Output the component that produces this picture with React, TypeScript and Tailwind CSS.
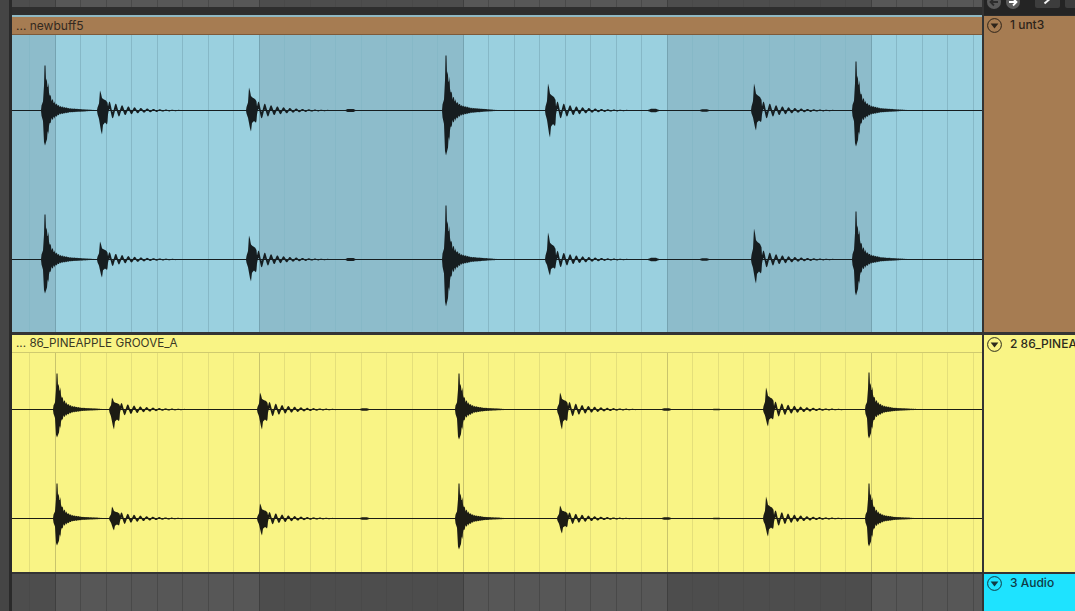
type Hit = { x: number; up: number; down: number; kind: "kick" | "ring" | "blob" };

const hit = (x: number, up: number, down: number, kind: Hit["kind"]): Hit => ({ x, up, down, kind });

const BLUE_TOP = [
  hit(44, 45, 35, "kick"), hit(100, 20, 24, "ring"), hit(249, 23, 21, "ring"), hit(348, 1.6, 1.6, "blob"),
  hit(445, 55, 45, "kick"), hit(548, 27, 27, "ring"), hit(651, 1.8, 1.8, "blob"), hit(702, 1.2, 1.2, "blob"),
  hit(754, 27, 20, "ring"), hit(855, 49, 36, "kick"),
];
const BLUE_BOTTOM = [
  hit(44, 45, 34, "kick"), hit(100, 18, 18, "ring"), hit(249, 24, 22, "ring"), hit(348, 1.6, 1.6, "blob"),
  hit(445, 54, 47, "kick"), hit(548, 27, 16, "ring"), hit(651, 1.8, 1.8, "blob"), hit(702, 1.2, 1.2, "blob"),
  hit(754, 31, 24, "ring"), hit(855, 48, 36, "kick"),
];
const YELLOW_TOP = [
  hit(56, 36, 28, "kick"), hit(112, 12, 20, "ring"), hit(260, 17, 20, "ring"), hit(362, 1.2, 1.2, "blob"),
  hit(458, 36, 30, "kick"), hit(560, 17, 20, "ring"), hit(664, 1.2, 1.2, "blob"), hit(714, 0.8, 0.8, "blob"),
  hit(766, 22, 17, "ring"), hit(868, 37, 29, "kick"),
];
const YELLOW_BOTTOM = [
  hit(56, 35, 27, "kick"), hit(112, 12, 12, "ring"), hit(260, 15, 17, "ring"), hit(362, 1.2, 1.2, "blob"),
  hit(458, 35, 31, "kick"), hit(560, 13, 15, "ring"), hit(664, 1.2, 1.2, "blob"), hit(714, 0.8, 0.8, "blob"),
  hit(766, 22, 18, "ring"), hit(868, 35, 28, "kick"),
];

type Table = [number, number][];

const KICK_UP: Table = [[-3, 0.08], [-1, 0.2], [0, 0.55], [0.5, 1], [1.5, 1], [2, 0.66], [4, 0.58], [5, 0.42], [7, 0.27], [11, 0.155], [16, 0.09], [26, 0.045], [40, 0.025], [60, 0]];
const KICK_DOWN: Table = [[-3, 0.1], [-1, 0.3], [0, 0.9], [1, 1], [3, 0.82], [5, 0.46], [7, 0.28], [10, 0.2], [16, 0.1], [26, 0.05], [40, 0.025], [60, 0]];
const RING_UP: Table = [[-3, 0.08], [-1, 0.35], [0, 1], [1, 0.85], [2, 0.62], [4, 0.55], [6, 0.5], [8, 0.36]];
const RING_DOWN: Table = [[-3, 0.08], [-1, 0.35], [0, 0.6], [1, 0.85], [2, 1], [3, 0.6], [5, 0.5], [7, 0.58], [8, 0.36]];

function lookup(t: Table, d: number) {
  if (d <= t[0][0] || d >= t[t.length - 1][0]) return 0;
  for (let i = 1; i < t.length; i++) {
    if (d <= t[i][0]) {
      const [x0, y0] = t[i - 1];
      const [x1, y1] = t[i];
      return y0 + ((y1 - y0) * (d - x0)) / (x1 - x0);
    }
  }
  return 0;
}

// upper and lower outline of one hit, as offsets from the centre line
function outline(h: Hit, d: number): [number, number] {
  if (h.kind === "blob") {
    if (d < -4 || d > 9) return [0, 0];
    const e = d < 0 ? 1 + d / 4 : d < 5 ? 1 : 1 - (d - 5) / 4;
    return [h.up * e, h.down * e];
  }
  // small jitter so the decay doesn't look like a smooth curve
  const jag = 1 + 0.16 * Math.sin(d * 3.1) + 0.08 * Math.sin(d * 7.3);
  if (h.kind === "kick") {
    return [h.up * lookup(KICK_UP, d) * (d > 2 ? jag : 1), h.down * lookup(KICK_DOWN, d) * (d > 3 ? jag : 1)];
  }
  if (d < 8) return [h.up * lookup(RING_UP, d), h.down * lookup(RING_DOWN, d)];
  if (d > 100) return [0, 0];
  // the ringing is a thick sine, it leaves the centre line on both sides
  const env = Math.exp(-(d - 8) / 24);
  const scale = Math.max(0.75, Math.min(1.1, (h.up + h.down) / 40));
  const wave = Math.sin((d - 8) * 1.0);
  const a = 5 * scale * env;
  const t = 3.4 * scale * env + 0.2;
  return [a * wave + t, -a * wave + t];
}

function channelPath(hits: Hit[], cy: number, width: number) {
  const top: string[] = [];
  const bottom: string[] = [];
  for (let px = 0; px <= width; px += 0.5) {
    const abs = px + 12;
    let up = 0.2;
    let down = 0.2;
    for (const h of hits) {
      const d = abs - h.x;
      if (d < -4 || d > 110) continue;
      const [u, l] = outline(h, d);
      // keep the thickest hit at this point
      if (u + l > up + down) {
        up = u;
        down = l;
      }
    }
    top.push(`${px} ${(cy - up).toFixed(1)}`);
    bottom.unshift(`${px} ${(cy + down).toFixed(1)}`);
  }
  return `M${top.join("L")}L${bottom.join("L")}Z`;
}

function Waveform({ channels, height, color }: { channels: { hits: Hit[]; cy: number }[]; height: number; color: string }) {
  return (
    <svg className="absolute inset-0" width={970} height={height} viewBox={`0 0 970 ${height}`}>
      {channels.map((c) => (
        <g key={c.cy} fill={color}>
          <path d={channelPath(c.hits, c.cy, 970)} />
          <rect x="0" y={c.cy - 0.5} width="970" height="1" />
        </g>
      ))}
    </svg>
  );
}

// beat cells between x=12 and x=982; every 8 cells the shade flips
const CELLS = Array.from({ length: 39 }, (_, i) => ({
  first: i === 0,
  dark: i < 2 || (i >= 10 && i < 18) || (i >= 26 && i < 34),
  bar: i === 1 || i === 9 || i === 17 || i === 25 || i === 33,
}));

function BlueGrid() {
  return (
    <div className="flex h-full">
      {CELLS.map((c, i) => (
        <div
          key={i}
          className={`h-full shrink-0 border-r ${c.first ? "w-[18px]" : "w-[25.5px]"} ${c.dark ? "bg-[#8dbccb]" : "bg-[#9ad0df]"} ${c.bar ? "border-[#75a3b1]" : "border-[#86b8c7]"}`}
        />
      ))}
    </div>
  );
}

function YellowGrid() {
  return (
    <div className="flex h-full bg-[#f9f485]">
      {CELLS.map((c, i) => (
        <div
          key={i}
          className={`h-full shrink-0 border-r ${c.first ? "w-[18px]" : "w-[25.5px]"} ${c.bar ? "border-[#c9c46c]" : "border-[#e4df7a]"}`}
        />
      ))}
    </div>
  );
}

function GrayGrid() {
  return (
    <div className="flex h-full">
      {CELLS.map((c, i) => (
        <div
          key={i}
          className={`h-full shrink-0 border-r ${c.first ? "w-[18px]" : "w-[25.5px]"} ${c.dark ? "bg-[#4d4d4d]" : "bg-[#575757]"} ${c.bar ? "border-[#3f3f3f]" : "border-[#494949]"}`}
        />
      ))}
    </div>
  );
}

function FoldIcon({ color }: { color: string }) {
  return (
    <svg width="15" height="15" viewBox="0 0 15 15" className="shrink-0">
      <circle cx="7.5" cy="7.5" r="6.9" fill="none" stroke={color} strokeWidth="1" />
      <path d="M3.6 5.6H11.4L7.5 10.4Z" fill={color} />
    </svg>
  );
}

function TrackHeader({ name, color, bg, grow }: { name: string; color: string; bg: string; grow: string }) {
  return (
    <div className={`flex items-start gap-[8px] overflow-hidden pl-[3px] pt-[2px] ${bg} ${grow}`}>
      <FoldIcon color={color} />
      <span className="whitespace-nowrap text-[12px] font-medium leading-[14px]" style={{ color }}>
        {name}
      </span>
    </div>
  );
}

function ArrowButton({ dir, color }: { dir: "left" | "right"; color: string }) {
  return (
    <div className="mt-[-5px] flex h-[14px] w-[14px] shrink-0 items-center justify-center rounded-full bg-[#5a5a5a]">
      <svg width="10" height="10" viewBox="0 0 10 10">
        <path
          d={dir === "left" ? "M9 5H2M5 1.5L1.5 5L5 8.5" : "M1 5H8M5 1.5L8.5 5L5 8.5"}
          stroke={color}
          strokeWidth="1.8"
          fill="none"
        />
      </svg>
    </div>
  );
}

export default function App() {
  return (
    <div className="flex h-screen w-full overflow-hidden bg-[#2b2b2b] font-['Inter',sans-serif]">
      {/* left edge */}
      <div className="h-full w-[9px] shrink-0 bg-[#454545]" />
      <div className="h-full w-[3px] shrink-0 bg-[#2a2a2a]" />

      {/* arrangement */}
      <div className="flex h-full w-[970px] shrink-0 flex-col overflow-hidden">
        <div className="h-[7px] shrink-0 overflow-hidden">
          <GrayGrid />
        </div>
        <div className="h-[8px] shrink-0 bg-[#2e2e2e]" />
        <div className="h-[2px] shrink-0 bg-[#8fb9c4]" />
        <div className="flex h-[18px] shrink-0 items-center border-b border-[#7d5a3a] bg-[#a67c52] pl-[4px] text-[12px] text-[#33291f]">
          ... newbuff5
        </div>
        <div className="relative h-[297px] shrink-0 overflow-hidden">
          <BlueGrid />
          <Waveform
            height={297}
            color="#161d20"
            channels={[
              { hits: BLUE_TOP, cy: 75.5 },
              { hits: BLUE_BOTTOM, cy: 224.5 },
            ]}
          />
        </div>
        <div className="h-[3px] shrink-0 bg-[#343434]" />
        <div className="flex h-[18px] shrink-0 items-center border-b border-[#cfca6f] bg-[#f9f485] pl-[4px] pt-[1px] text-[11.7px] text-[#3a3924]">
          ... 86_PINEAPPLE GROOVE_A
        </div>
        <div className="relative h-[219px] shrink-0 overflow-hidden">
          <YellowGrid />
          <Waveform
            height={219}
            color="#1c1c14"
            channels={[
              { hits: YELLOW_TOP, cy: 56.5 },
              { hits: YELLOW_BOTTOM, cy: 165.5 },
            ]}
          />
        </div>
        <div className="h-[2px] shrink-0 bg-[#343434]" />
        <div className="min-h-0 flex-1">
          <GrayGrid />
        </div>
      </div>

      {/* separator */}
      <div className="h-full w-[2px] shrink-0 bg-[#333333]" />

      {/* track headers */}
      <div className="flex h-full min-w-0 flex-1 flex-col">
        <div className="flex h-[15px] shrink-0 items-start gap-[5px] overflow-hidden bg-[#242424] pl-[3px]">
          <ArrowButton dir="left" color="#2c2c2c" />
          <ArrowButton dir="right" color="#ffffff" />
          <div className="ml-[10px] mt-[-6px] flex h-[14px] w-[25px] shrink-0 items-center justify-center rounded-[2px] bg-[#3d3d3d]">
            <svg width="12" height="12" viewBox="0 0 12 12">
              <path d="M2.5 8.5L9.5 2.5" stroke="#f2f2f2" strokeWidth="2" fill="none" />
            </svg>
          </div>
          <div className="mt-[-6px] h-[14px] w-[12px] shrink-0 rounded-[2px] bg-[#3d3d3d]" />
        </div>
        <div className="h-[1px] shrink-0 bg-[#2c2c2c]" />
        <TrackHeader name="1 unt3" color="#2e241a" bg="bg-[#a67c52]" grow="h-[316px] shrink-0" />
        <div className="h-[3px] shrink-0 bg-[#343434]" />
        <TrackHeader name="2 86_PINEAPPLE GROOVE_A" color="#2c2b1c" bg="bg-[#f9f485]" grow="h-[237px] shrink-0" />
        <div className="h-[2px] shrink-0 bg-[#343434]" />
        <TrackHeader name="3 Audio" color="#0f3a45" bg="bg-[#1ee3ff]" grow="min-h-0 flex-1" />
      </div>
    </div>
  );
}
